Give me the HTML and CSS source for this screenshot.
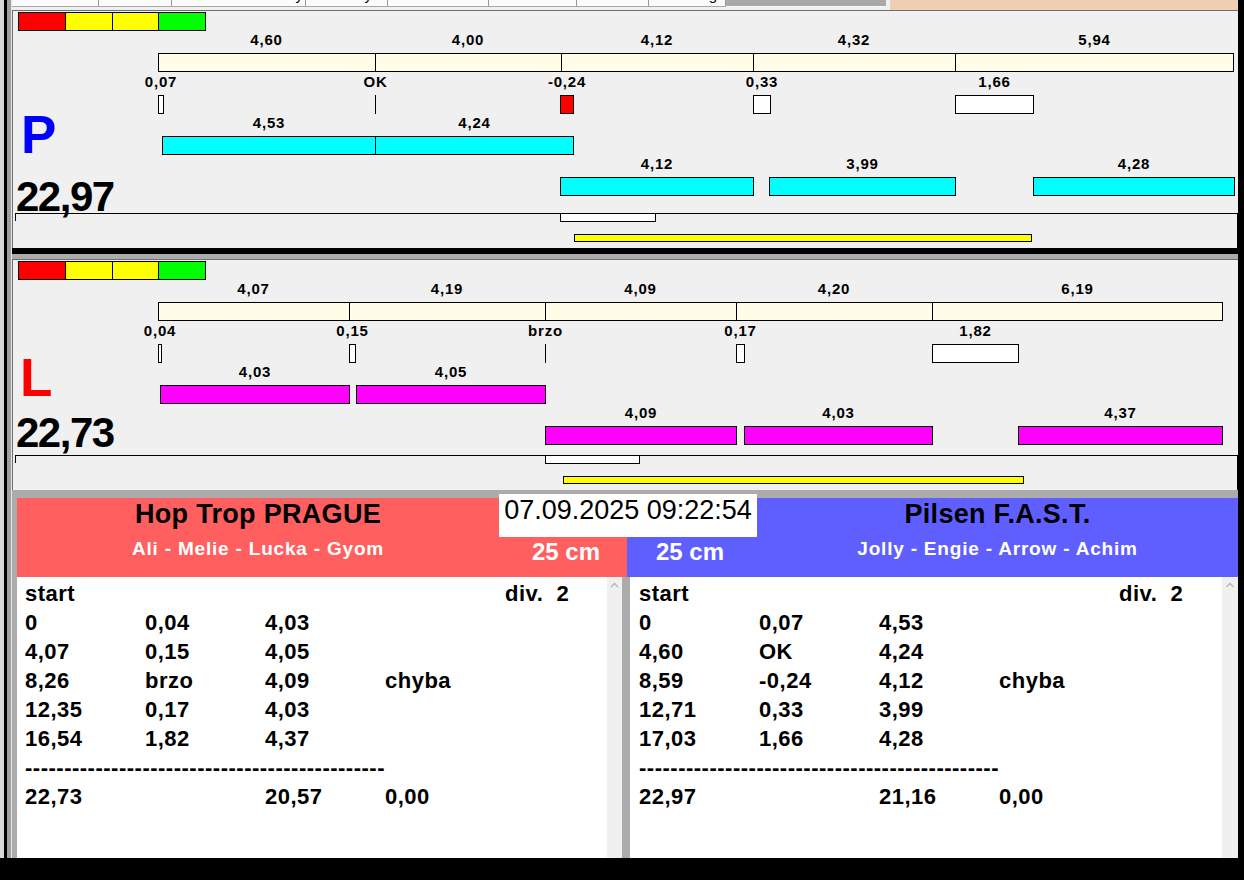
FILE: index.html
```html
<!DOCTYPE html>
<html lang="cs">
<head>
<meta charset="utf-8">
<title>Agility – časomíra</title>
<link rel="stylesheet" href="styles.css">
</head>
<body>
<div class="window">
  <div class="frame">
    <div class="frame-left"></div>
    <div class="center">
      <div class="tabstrip">
        <div class="tab" style="width:87px"></div>
        <div class="tab" style="width:73px"></div>
        <div class="tab" style="width:134px"><span class="tab-text">y</span></div>
        <div class="tab" style="width:82px"><span class="tab-text tt2">y</span></div>
        <div class="tab" style="width:101px"></div>
        <div class="tab" style="width:88px"></div>
        <div class="tab" style="width:72px"></div>
        <div class="tab" style="width:77px"><span class="tab-text tt3">g</span></div>
        <div class="tab-gray"></div>
        <div class="tab-peach"></div>
      </div>

      <section class="panel panel-p">
        <div class="sig"><span class="s-red"></span><span class="s-yel"></span><span class="s-yel"></span><span class="s-grn"></span></div>
        <div class="ruler">
          <div class="seg" style="width:217px"><span class="lbl">4,60</span><span class="cell"></span></div>
          <div class="seg" style="width:186px"><span class="lbl">4,00</span><span class="cell"></span></div>
          <div class="seg" style="width:192px"><span class="lbl">4,12</span><span class="cell"></span></div>
          <div class="seg" style="width:202px"><span class="lbl">4,32</span><span class="cell"></span></div>
          <div class="seg" style="width:279px"><span class="lbl">5,94</span><span class="cell"></span></div>
        </div>
        <div class="row react">
          <div class="item" style="left:146px;width:6px"><span class="lbl">0,07</span><span class="bar box"></span></div>
          <div class="item" style="left:363px;width:1px"><span class="lbl">OK</span><span class="bar line"></span></div>
          <div class="item" style="left:548px;width:14px"><span class="lbl">-0,24</span><span class="bar box fault"></span></div>
          <div class="item" style="left:741px;width:18px"><span class="lbl">0,33</span><span class="bar box"></span></div>
          <div class="item" style="left:943px;width:79px"><span class="lbl">1,66</span><span class="bar box"></span></div>
        </div>
        <div class="row">
          <div class="item" style="left:150px;width:214px"><span class="lbl">4,53</span><span class="bar cyan"></span></div>
          <div class="item" style="left:363px;width:199px"><span class="lbl">4,24</span><span class="bar cyan"></span></div>
        </div>
        <div class="row">
          <div class="item" style="left:548px;width:194px"><span class="lbl">4,12</span><span class="bar cyan"></span></div>
          <div class="item" style="left:757px;width:187px"><span class="lbl">3,99</span><span class="bar cyan"></span></div>
          <div class="item" style="left:1021px;width:202px"><span class="lbl">4,28</span><span class="bar cyan"></span></div>
        </div>
        <div class="strip">
          <span class="strip-white" style="left:545px;width:96px"></span>
          <span class="strip-yellow" style="left:559px;width:458px"></span>
        </div>
        <div class="side-letter letter-p">P</div>
        <div class="side-total total-p">22,97</div>
      </section>

      <div class="sep-black"></div>
      <div class="sep-gray"></div>

      <section class="panel panel-l">
        <div class="sig"><span class="s-red"></span><span class="s-yel"></span><span class="s-yel"></span><span class="s-grn"></span></div>
        <div class="ruler">
          <div class="seg" style="width:191px"><span class="lbl">4,07</span><span class="cell"></span></div>
          <div class="seg" style="width:196px"><span class="lbl">4,19</span><span class="cell"></span></div>
          <div class="seg" style="width:191px"><span class="lbl">4,09</span><span class="cell"></span></div>
          <div class="seg" style="width:196px"><span class="lbl">4,20</span><span class="cell"></span></div>
          <div class="seg" style="width:291px"><span class="lbl">6,19</span><span class="cell"></span></div>
        </div>
        <div class="row react">
          <div class="item" style="left:146px;width:4px"><span class="lbl">0,04</span><span class="bar box"></span></div>
          <div class="item" style="left:337px;width:7px"><span class="lbl">0,15</span><span class="bar box"></span></div>
          <div class="item" style="left:533px;width:1px"><span class="lbl">brzo</span><span class="bar line"></span></div>
          <div class="item" style="left:724px;width:9px"><span class="lbl">0,17</span><span class="bar box"></span></div>
          <div class="item" style="left:920px;width:87px"><span class="lbl">1,82</span><span class="bar box"></span></div>
        </div>
        <div class="row">
          <div class="item" style="left:148px;width:190px"><span class="lbl">4,03</span><span class="bar magenta"></span></div>
          <div class="item" style="left:344px;width:190px"><span class="lbl">4,05</span><span class="bar magenta"></span></div>
        </div>
        <div class="row">
          <div class="item" style="left:533px;width:192px"><span class="lbl">4,09</span><span class="bar magenta"></span></div>
          <div class="item" style="left:732px;width:189px"><span class="lbl">4,03</span><span class="bar magenta"></span></div>
          <div class="item" style="left:1006px;width:205px"><span class="lbl">4,37</span><span class="bar magenta"></span></div>
        </div>
        <div class="strip">
          <span class="strip-white" style="left:530px;width:95px"></span>
          <span class="strip-yellow" style="left:548px;width:461px"></span>
        </div>
        <div class="side-letter letter-l">L</div>
        <div class="side-total total-l">22,73</div>
      </section>

      <div class="lower">
        <div class="teams">
          <div class="team team-red">
            <div class="t-name">Hop Trop PRAGUE</div>
            <div class="t-members">Ali - Melie - Lucka - Gyom</div>
            <div class="t-cm">25 cm</div>
          </div>
          <div class="team team-blue">
            <div class="t-name">Pilsen F.A.S.T.</div>
            <div class="t-members">Jolly - Engie - Arrow - Achim</div>
            <div class="t-cm">25 cm</div>
          </div>
          <div class="datetime">07.09.2025 09:22:54</div>
        </div>
        <div class="lists">
          <div class="list list-left">
            <div class="list-body">
              <div class="lrow"><span>start</span><span></span><span></span><span></span><span>div.  2</span></div>
              <div class="lrow"><span>0</span><span>0,04</span><span>4,03</span></div>
              <div class="lrow"><span>4,07</span><span>0,15</span><span>4,05</span></div>
              <div class="lrow"><span>8,26</span><span>brzo</span><span>4,09</span><span>chyba</span></div>
              <div class="lrow"><span>12,35</span><span>0,17</span><span>4,03</span></div>
              <div class="lrow"><span>16,54</span><span>1,82</span><span>4,37</span></div>
              <div class="lrow"><span class="dashes">----------------------------------------------</span></div>
              <div class="lrow"><span>22,73</span><span></span><span>20,57</span><span>0,00</span></div>
            </div>
            <div class="scroll"><svg class="arrow" width="15" height="12" viewBox="0 0 15 12"><polyline points="4,8 7.5,4.5 11,8" fill="none" stroke="#b4b4b4" stroke-width="1.3"/></svg></div>
          </div>
          <div class="list list-right">
            <div class="list-body">
              <div class="lrow"><span>start</span><span></span><span></span><span></span><span>div.  2</span></div>
              <div class="lrow"><span>0</span><span>0,07</span><span>4,53</span></div>
              <div class="lrow"><span>4,60</span><span>OK</span><span>4,24</span></div>
              <div class="lrow"><span>8,59</span><span>-0,24</span><span>4,12</span><span>chyba</span></div>
              <div class="lrow"><span>12,71</span><span>0,33</span><span>3,99</span></div>
              <div class="lrow"><span>17,03</span><span>1,66</span><span>4,28</span></div>
              <div class="lrow"><span class="dashes">----------------------------------------------</span></div>
              <div class="lrow"><span>22,97</span><span></span><span>21,16</span><span>0,00</span></div>
            </div>
            <div class="scroll scroll-r"><svg class="arrow" width="16" height="12" viewBox="0 0 16 12"><polyline points="4.5,8 8,4.5 11.5,8" fill="none" stroke="#b4b4b4" stroke-width="1.3"/></svg></div>
          </div>
        </div>
      </div>
    </div>
    <div class="frame-right"></div>
  </div>
  <div class="bottombar"></div>
</div>
</body>
</html>
```

FILE: styles.css
```css
* { box-sizing: border-box; }

html, body {
  margin: 0;
  padding: 0;
  background: #000;
}

body {
  font-family: "Liberation Sans", Arial, sans-serif;
  color: #000;
}

.window {
  width: 1244px;
  height: 880px;
  display: flex;
  flex-direction: column;
  background: #000;
  overflow: hidden;
}

.frame {
  display: flex;
  height: 858px;
}

.frame-left {
  width: 12px;
  flex-shrink: 0;
  background: linear-gradient(to right, #d9d9d9 0 4px, #000 4px 7px, #a0a0a0 7px 11px, #e6e6e6 11px 12px);
}

.frame-right {
  width: 6px;
  flex-shrink: 0;
  background: #000;
}

.bottombar {
  height: 22px;
  background: #000;
}

.center {
  width: 1226px;
  flex-shrink: 0;
  display: flex;
  flex-direction: column;
  background: #f0f0f0;
}

/* ---------- tab strip ---------- */
.tabstrip {
  height: 10px;
  display: flex;
  align-items: flex-start;
  background: #f0f0f0;
}

.tab {
  height: 7px;
  background: #fbfbfb;
  border-right: 1px solid #9a9a9a;
  border-bottom: 1px solid #a8a8a8;
  overflow: hidden;
  text-align: right;
  padding-right: 2px;
}

.tab-text {
  display: block;
  margin-top: -13px;
  font-size: 15px;
  line-height: 15px;
}

.tt2 { padding-right: 13px; }
.tt3 { padding-right: 6px; }

.tab-gray {
  width: 160px;
  height: 7px;
  background: #a9a9a9;
  border-bottom: 1px solid #f8f8f8;
}

.tab-peach {
  margin-left: 4px;
  width: 348px;
  height: 12px;
  background: #f0cfb2;
  border-left: 1px solid #d8d8d8;
}

/* ---------- chart panels ---------- */
.panel {
  position: relative;
  display: flex;
  flex-direction: column;
  background: #f0f0f0;
  box-shadow: inset 1px 1px 0 #6e6e6e;
}

.panel-p { height: 238px; }
.panel-l { height: 231px; }

.sep-black { height: 6px; background: #000; }
.sep-gray { height: 5px; background: #ababab; }

.sig {
  display: flex;
  margin: 2px 0 0 6px;
  width: 188px;
  height: 19px;
  border: 1px solid #000;
}

.sig span { flex: 1; border-right: 1px solid #000; }
.sig span:last-child { border-right: 0; }
.s-red { background: #ff0000; }
.s-yel { background: #ffff00; }
.s-grn { background: #00ff00; }

.lbl {
  display: block;
  margin-top: 1px;
  margin-bottom: 6px;
  height: 15px;
  font-size: 15px;
  line-height: 15px;
  font-weight: bold;
  letter-spacing: 0.8px;
  white-space: nowrap;
}

.ruler {
  display: flex;
  margin-left: 146px;
  height: 41px;
}

.seg {
  display: flex;
  flex-direction: column;
  align-items: center;
}

.cell {
  align-self: stretch;
  height: 19px;
  background: #fffde8;
  border: 1px solid #000;
  border-right: 0;
}

.seg:last-child .cell { border-right: 1px solid #000; }

.row {
  position: relative;
  height: 41px;
}

.react { margin-top: 1px; }

.item {
  position: absolute;
  top: 0;
  display: flex;
  flex-direction: column;
  align-items: center;
}

.bar {
  align-self: stretch;
  height: 19px;
  border: 1px solid #000;
}

.box { background: #fff; }
.fault { background: #ff0000; }
.line { border: 0; border-left: 1px solid #000; }
.cyan { background: #00ffff; }
.magenta { background: #ff00ff; }

.strip {
  position: relative;
  margin-top: auto;
  margin-left: 3px;
  width: 1223px;
  height: 35px;
  border-top: 1px solid #000;
  border-right: 1px solid #000;
}

.strip::before {
  content: "";
  position: absolute;
  left: 0;
  top: 0;
  width: 1px;
  height: 7px;
  background: #000;
}

.strip-white {
  position: absolute;
  top: -1px;
  height: 9px;
  background: #fff;
  border: 1px solid #000;
}

.strip-yellow {
  position: absolute;
  top: 20px;
  height: 8px;
  background: #ffff00;
  border: 1px solid #000;
}

.side-letter {
  position: absolute;
  left: 9px;
  font-size: 53px;
  line-height: 53px;
  font-weight: bold;
}

.letter-p { top: 98px; color: #0000ff; }
.letter-l { top: 92px; left: 8px; color: #ff0000; }

.side-total {
  position: absolute;
  left: 4px;
  font-size: 42px;
  line-height: 42px;
  font-weight: bold;
  letter-spacing: -1.5px;
}

.total-p { top: 166px; }
.total-l { top: 153px; }

/* ---------- lower section ---------- */
.lower {
  flex: 1;
  background: #ababab;
  padding: 8px 0 0 5px;
  display: flex;
  flex-direction: column;
}

.teams {
  position: relative;
  display: grid;
  grid-template-columns: 610px 611px;
  height: 79px;
}

.team {
  display: grid;
  grid-template-rows: 37px 42px;
  font-weight: bold;
}

.team-red {
  background: #ff5f5f;
  grid-template-columns: 482px 1fr;
}

.team-blue {
  background: #5f5fff;
  grid-template-columns: 130px 1fr;
}

.t-name {
  grid-row: 1;
  text-align: center;
  font-size: 27px;
  line-height: 27px;
  padding-top: 3px;
  letter-spacing: 0.3px;
  white-space: nowrap;
}

.t-members {
  grid-row: 2;
  text-align: center;
  color: #fff;
  font-size: 19px;
  line-height: 19px;
  padding-top: 4px;
  letter-spacing: 0.8px;
  white-space: nowrap;
}

.t-cm {
  grid-row: 2;
  color: #fff;
  font-size: 24px;
  line-height: 24px;
  padding-top: 5px;
  white-space: nowrap;
}

.team-red .t-name,
.team-red .t-members { grid-column: 1; }
.team-red .t-cm { grid-column: 2; text-align: right; padding-right: 27px; }

.team-blue .t-name,
.team-blue .t-members { grid-column: 2; }
.team-blue .t-cm { grid-column: 1; text-align: left; padding-left: 29px; }

.datetime {
  position: absolute;
  left: 482px;
  top: -4px;
  width: 258px;
  height: 43px;
  background: #fff;
  text-align: center;
  font-size: 27px;
  line-height: 32px;
  font-weight: normal;
  white-space: nowrap;
}

.lists {
  display: flex;
  gap: 8px;
  height: 281px;
}

.list {
  display: flex;
  flex-shrink: 0;
  background: #fff;
}

.list-left { width: 605px; }
.list-right { width: 608px; }

.list-body {
  flex: 1;
  min-width: 0;
  overflow: hidden;
  padding: 2px 0 0 8px;
}

.list-right .list-body { padding-left: 9px; }

.scroll {
  width: 15px;
  flex-shrink: 0;
  background: #f0f0f0;
}

.scroll-r { width: 16px; }

.arrow { display: block; margin-top: 2px; }

.lrow {
  display: grid;
  grid-template-columns: repeat(5, 120px);
  height: 29px;
  font-size: 22px;
  line-height: 29px;
  font-weight: bold;
  letter-spacing: 0.5px;
  white-space: pre;
}

.dashes { grid-column: 1 / -1; }
```
